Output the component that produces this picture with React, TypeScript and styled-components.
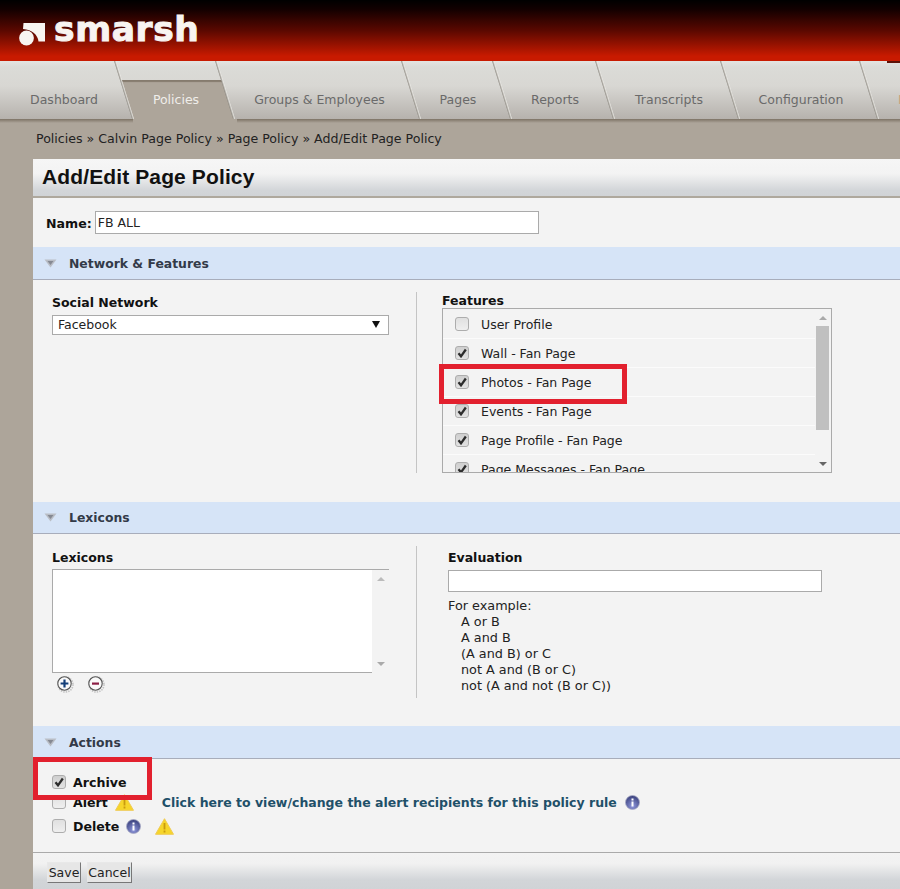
import React from "react";
import styled, { createGlobalStyle } from "styled-components";

const Global = createGlobalStyle`
  html, body { margin: 0; padding: 0; background: #ada59a; }
  body { font-family: "DejaVu Sans", Verdana, sans-serif; font-size: 12.5px; color: #222; }
`;
const Page = styled.div`
  width: 900px; height: 889px; overflow: hidden; position: relative; background: #ada59a;
`;
const Header = styled.header`
  height: 61px; box-sizing: border-box; padding: 12px 0 0 19px;
  display: flex; align-items: flex-start; gap: 5px;
  background: linear-gradient(#000 0%, #120000 15%, #5a0800 50%, #a81500 80%, #c81a00 92%, #c81a00 100%);
`;
const LogoText = styled.span`
  font-family: "DejaVu Sans", sans-serif; font-weight: bold; font-size: 34.5px; line-height: 34px;
  color: #f8f4f1; letter-spacing: 0.6px; -webkit-text-stroke: 1px #f8f4f1;
`;
const TabBar = styled.nav`
  display: flex; height: 58px; position: relative; overflow: hidden;
  background: linear-gradient(#e4e4e1 0, #dbdbd7 6px, #d8d7d3 25px, #b6b2ad 100%);
`;
const Tab = styled.div<{ $w: number; $pad: number; $active?: boolean; $edge?: boolean }>`
  width: ${p => p.$w}px; flex: none; position: relative; box-sizing: border-box;
  padding: 31px 0 0 ${p => p.$pad}px; text-align: ${p => (p.$edge ? "left" : "center")}; font-size: 12.5px; line-height: 16px;
  white-space: nowrap;
  color: ${p => (p.$active ? "#f0eeea" : p.$edge ? "#c9a27e" : "#6a6a6a")};
  & > span { position: relative; z-index: 2; }
  ${p => !p.$edge && `
    &::after {
      content: ""; position: absolute; z-index: 3; top: 0; right: -1px; bottom: 0; width: 2px;
      background: linear-gradient(90deg, #8d8981, #efeeea);
      transform: skewX(17.3deg); transform-origin: top left;
    }
  `}
  ${p => p.$active && `
    &::before {
      content: ""; position: absolute; z-index: 1; top: 19px; left: 6px; bottom: 0; width: 101px;
      background: #ada59a;
      box-shadow: inset 0 2px 1px #857b6e;
      transform: skewX(17.3deg); transform-origin: top left;
    }
  `}
  ${p => p.$edge && `
    &::before {
      content: ""; position: absolute; top: 0; left: 27px; right: 0; height: 2px; background: #5c1208;
    }
  `}
`;
const TabShadow = styled.div`
  height: 4px; margin-bottom: -4px; position: relative;
  background:
    linear-gradient(90deg, transparent 133px, #ada59a 133px, #ada59a 237px, transparent 237px),
    linear-gradient(#7d7365, #ada59a);
`;
const Crumbs = styled.div`
  height: 40px; box-sizing: border-box; padding: 12px 0 0 36px; font-size: 12.6px; line-height: 16px; color: #222;
`;
const Panel = styled.main`
  margin-left: 33px; width: 867px; background: #f3f3f3;
`;
const TitleBar = styled.div`
  height: 37px; box-sizing: border-box; padding: 5px 0 0 9px; border-radius: 5px 0 0 0;
  background: linear-gradient(#f6f6f6 0, #f3f3f3 40%, #d2d5d8 85%, #d0d3d6 100%);
`;
const Title = styled.h1`
  margin: 0; font: bold 21px/26px "Liberation Sans", Arial, sans-serif; letter-spacing: 0.12px; color: #111;
`;
const TitleRule = styled.div`height: 2px; background: #aea89d;`;
const NameRow = styled.div`
  height: 49px; box-sizing: border-box; padding: 13px 0 0 13px; display: flex; gap: 3px; align-items: flex-start;
`;
const NameLabel = styled.label`font-weight: bold; font-size: 12.6px; line-height: 25px; color: #111;`;
const TextBox = styled.div<{ $w: number; $h: number }>`
  width: ${p => p.$w}px; height: ${p => p.$h}px; box-sizing: border-box; background: #fff; border: 1px solid #aaa;
  padding-left: 2px; font-size: 12.5px; line-height: 21px; color: #222;
`;
const SectionBar = styled.div<{ $h: number }>`
  height: ${p => p.$h}px; box-sizing: border-box; background: #d6e4f7; border-bottom: 1px solid #a8adbb;
  display: flex; align-items: center; padding-left: 11px; gap: 12px;
  font-weight: bold; font-size: 12.4px; color: #333a48;
`;
const Columns = styled.div<{ $h: number; $bottom: number }>`
  height: ${p => p.$h}px; box-sizing: border-box; padding: 12px 0 ${p => p.$bottom}px; display: flex; align-items: stretch;
`;
const LeftCol = styled.div`
  width: 384px; box-sizing: border-box; border-right: 1px solid #c4c4c4; padding-left: 19px;
`;
const RightCol = styled.div<{ $pad: number }>`
  padding-left: ${p => p.$pad}px; flex: 1;
`;
const FieldLabel = styled.div<{ $mt?: number; $h?: number }>`
  font-weight: bold; font-size: 12.5px; line-height: 16px; color: #111;
  margin-top: ${p => p.$mt ?? 0}px; height: ${p => p.$h ?? 16}px;
`;
const SelectBox = styled.div`
  width: 337px; height: 20px; box-sizing: border-box; background: #fff; border: 1px solid #aaa;
  display: flex; justify-content: space-between; align-items: center; padding: 0 8px 1px 5px;
  font-size: 12.5px; color: #222;
`;
const Caret = styled.span`
  width: 0; height: 0; border-left: 4px solid transparent; border-right: 4px solid transparent; border-top: 7px solid #111;
`;
const ListWrap = styled.div`position: relative;`;
const ListBox = styled.div`
  width: 390px; height: 165px; box-sizing: border-box; border: 1px solid #aaa; padding-top: 1px; position: relative; overflow: hidden;
`;
const Item = styled.div`
  height: 29px; box-sizing: border-box; width: 372px; display: flex; align-items: center; gap: 12px; padding-left: 12px;
  border-bottom: 1px solid #fbfbfb; font-size: 12.5px; color: #222; flex: none;
`;
const ScrollTrack = styled.div<{ $bg: string; $left: number; $w: number }>`
  position: absolute; top: 0; bottom: -1px; left: ${p => p.$left}px; width: ${p => p.$w}px; background: ${p => p.$bg};
`;
const Thumb = styled.div`
  position: absolute; top: 17px; height: 104px; left: 1px; right: 1px; background: #c0c0c0;
`;
const Arrow = styled.span<{ $down?: boolean; $c: string }>`
  position: absolute; left: 50%; margin-left: -4px; width: 0; height: 0;
  border-left: 4px solid transparent; border-right: 4px solid transparent;
  ${p => p.$down
    ? `bottom: 7px; border-top: 4px solid ${p.$c};`
    : `top: 7px; border-bottom: 4px solid ${p.$c};`}
`;
const Box = styled.span<{ $on?: boolean }>`
  width: 14px; height: 14px; box-sizing: border-box; flex: none; display: inline-flex; align-items: center; justify-content: center;
  border: 1px solid #adadad; border-radius: 3px;
  background: ${p => (p.$on ? "linear-gradient(#cfcfcf, #e2e2e2)" : "linear-gradient(#e0e0e0, #efefef)")};
`;
const TextArea = styled.div`
  width: 337px; height: 104px; box-sizing: border-box; position: relative; background: #fff;
  border: 1px solid #aaa; border-right: 0; margin-top: 3px;
`;
const IconRow = styled.div`
  display: flex; gap: 13px; padding: 2px 0 0 4px;
`;
const Hint = styled.div`
  margin-top: 6px; font-size: 12.8px; line-height: 16px; color: #222;
`;
const HintLine = styled.div`padding-left: 13px;`;
const ActionsBody = styled.div`
  height: 93px; box-sizing: border-box; padding: 12px 0 0 19px; position: relative;
`;
const ActionRow = styled.div<{ $h: number }>`
  height: ${p => p.$h}px; display: flex; align-items: center; gap: 7px; font-weight: bold; font-size: 12.6px; color: #111;
`;
const ActionLink = styled.a`
  color: #1f5069; margin-left: 21px; font-weight: bold; font-size: 12.5px; margin-right: 1px;
`;
const Footer = styled.div`
  height: 37px; box-sizing: border-box; border-top: 1px solid #aaa; padding: 9px 0 0 14px; display: flex; gap: 6px;
  background: linear-gradient(#f3f3f3 0, #f1f1f1 30%, #d2d5d8 75%, #d0d3d6 100%);
`;
const Btn = styled.button<{ $w: number }>`
  width: ${p => p.$w}px; height: 21px; padding: 0; margin: 0; font: 12.5px "DejaVu Sans", sans-serif; color: #222;
  background: #e6e6e6; border: 1px solid #e8e8e8; border-right-color: #777; border-bottom-color: #777;
`;
const RedBox = styled.div<{ $l: number; $t: number; $w: number; $h: number }>`
  position: absolute; left: ${p => p.$l}px; top: ${p => p.$t}px; width: ${p => p.$w}px; height: ${p => p.$h}px;
  box-sizing: border-box; border: 5px solid #e2202e; pointer-events: none; z-index: 5;
`;

const Logo = () => (
  <svg width="30" height="34" viewBox="0 0 30 34">
    <circle cx="7.5" cy="26" r="7.4" fill="#f8f4f1" />
    <path d="M4.5 11 H26 V29.5 H19.5 C19 23 13 17.5 4 17 Z" fill="#f8f4f1" />
  </svg>
);
const Tri = () => (
  <svg width="13" height="9" viewBox="0 0 13 9">
    <path d="M0.5 0.5 H12.5 L6.5 8.5 Z" fill="#b9bdc5" />
    <path d="M3.5 2 H9.5 L6.5 6 Z" fill="#858992" />
  </svg>
);
const Check = () => (
  <svg width="10" height="10" viewBox="0 0 10 10">
    <path d="M1.5 5.2 L4 8.3 L8.8 1.5" fill="none" stroke="#2c2c2c" strokeWidth="2.3" />
  </svg>
);
const Info = () => (
  <svg width="15" height="15" viewBox="0 0 15 15">
    <defs>
      <radialGradient id="ig" cx="50%" cy="75%" r="70%">
        <stop offset="0" stopColor="#8f97dc" />
        <stop offset="1" stopColor="#3c437f" />
      </radialGradient>
    </defs>
    <circle cx="7.5" cy="7.5" r="7" fill="url(#ig)" stroke="#a9acc6" strokeWidth="0.8" />
    <rect x="6.5" y="6.5" width="2" height="5" fill="#fff" />
    <rect x="6.5" y="3.5" width="2" height="2" fill="#fff" />
  </svg>
);
const Warn = () => (
  <svg width="19" height="17" viewBox="0 0 19 17">
    <path d="M9.5 0.7 L18.5 16.3 H0.5 Z" fill="#f6d52a" stroke="#efcb55" strokeLinejoin="round" />
    <rect x="8.6" y="5" width="1.8" height="6.5" fill="#c99a10" />
    <rect x="8.6" y="12.5" width="1.8" height="2" fill="#c99a10" />
  </svg>
);
const Round = ({ minus }: { minus?: boolean }) => (
  <svg width="18" height="18" viewBox="0 0 18 18">
    <circle cx="9.5" cy="9.5" r="7.5" fill="none" stroke="#c4c4c4" strokeWidth="1.6" strokeDasharray="1.5 1" />
    <circle cx="8.5" cy="8.5" r="6.7" fill="#fafafa" stroke="#555" strokeWidth="1.1" />
    {minus
      ? <rect x="5" y="7.5" width="7" height="2.2" fill="#8c1f45" />
      : <path d="M7.4 4.6 H9.6 V7.4 H12.4 V9.6 H9.6 V12.4 H7.4 V9.6 H4.6 V7.4 H7.4 Z" fill="#143f78" />}
  </svg>
);

const tabs: [string, number, number][] = [
  ["Dashboard", 115, 13], ["Policies", 101, 21], ["Groups & Employees", 186, 21], ["Pages", 91, 21],
  ["Reports", 103, 21], ["Transcripts", 125, 21], ["Configuration", 139, 21],
];
const features: [string, boolean][] = [
  ["User Profile", false], ["Wall - Fan Page", true], ["Photos - Fan Page", true],
  ["Events - Fan Page", true], ["Page Profile - Fan Page", true], ["Page Messages - Fan Page", true],
];
const examples = ["A or B", "A and B", "(A and B) or C", "not A and (B or C)", "not (A and not (B or C))"];

export default function App() {
  return (
    <Page>
      <Global />
      <Header>
        <Logo />
        <LogoText>smarsh</LogoText>
      </Header>
      <TabBar>
        {tabs.map(([t, w, pad]) => (
          <Tab key={t} $w={w} $pad={pad} $active={t === "Policies"}><span>{t}</span></Tab>
        ))}
        <Tab $w={60} $pad={38} $edge><span>Help</span></Tab>
      </TabBar>
      <TabShadow />
      <Crumbs>Policies » Calvin Page Policy » Page Policy » Add/Edit Page Policy</Crumbs>
      <Panel>
        <TitleBar><Title>Add/Edit Page Policy</Title></TitleBar>
        <TitleRule />
        <NameRow>
          <NameLabel>Name:</NameLabel>
          <TextBox $w={444} $h={23}>FB ALL</TextBox>
        </NameRow>
        <SectionBar $h={33}><Tri />Network &amp; Features</SectionBar>
        <Columns $h={222} $bottom={29}>
          <LeftCol>
            <FieldLabel $mt={3} $h={20}>Social Network</FieldLabel>
            <SelectBox>Facebook<Caret /></SelectBox>
          </LeftCol>
          <RightCol $pad={25}>
            <FieldLabel $mt={1} $h={15}>Features</FieldLabel>
            <ListWrap>
              <ListBox>
                {features.map(([f, on]) => (
                  <Item key={f}><Box $on={on}>{on && <Check />}</Box>{f}</Item>
                ))}
                <ScrollTrack $bg="#f3f3f3" $left={372} $w={15}>
                  <Arrow $c="#aaa" />
                  <Thumb />
                  <Arrow $down $c="#666" />
                </ScrollTrack>
              </ListBox>
              <RedBox $l={-3} $t={56} $w={188} $h={40} />
            </ListWrap>
          </RightCol>
        </Columns>
        <SectionBar $h={32}><Tri />Lexicons</SectionBar>
        <Columns $h={192} $bottom={28}>
          <LeftCol>
            <FieldLabel $mt={4}>Lexicons</FieldLabel>
            <TextArea>
              <ScrollTrack $bg="#f3f3f3" $left={319} $w={17}>
                <Arrow $c="#bbb" />
                <Arrow $down $c="#aaa" />
              </ScrollTrack>
            </TextArea>
            <IconRow><Round /><Round minus /></IconRow>
          </LeftCol>
          <RightCol $pad={31}>
            <FieldLabel $mt={4} $h={20}>Evaluation</FieldLabel>
            <TextBox $w={374} $h={22} />
            <Hint>
              For example:
              {examples.map(e => <HintLine key={e}>{e}</HintLine>)}
            </Hint>
          </RightCol>
        </Columns>
        <SectionBar $h={33}><Tri />Actions</SectionBar>
        <ActionsBody>
          <ActionRow $h={22}><Box $on><Check /></Box>Archive</ActionRow>
          <ActionRow $h={18}>
            <Box />Alert<Warn />
            <ActionLink>Click here to view/change the alert recipients for this policy rule</ActionLink>
            <Info />
          </ActionRow>
          <ActionRow $h={30}><Box />Delete<Info /><span /><Warn /></ActionRow>
          <RedBox $l={0} $t={-2} $w={119} $h={43} />
        </ActionsBody>
        <Footer>
          <Btn $w={34}>Save</Btn>
          <Btn $w={45}>Cancel</Btn>
        </Footer>
      </Panel>
    </Page>
  );
}
